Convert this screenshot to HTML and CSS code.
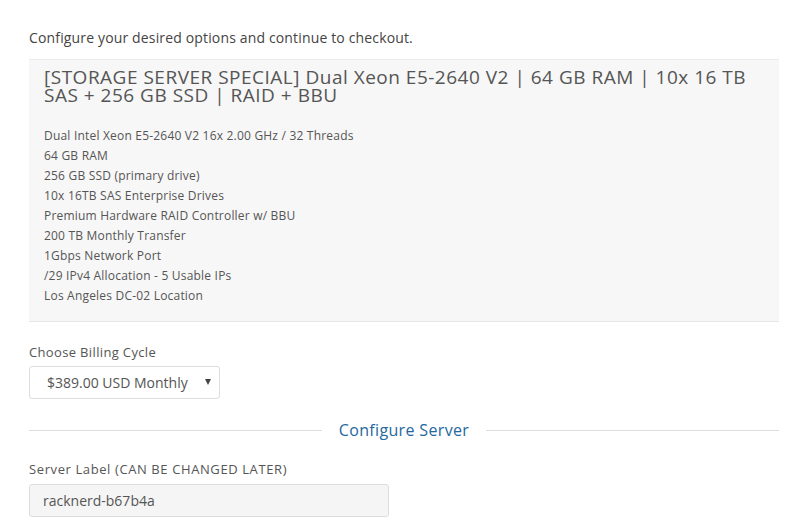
FILE: index.html
```html
<!DOCTYPE html>
<html>
<head>
<meta charset="utf-8">
<link rel="stylesheet" href="styles.css">
</head>
<body>
<div class="page">
  <p class="intro">Configure your desired options and continue to checkout.</p>
  <div class="product">
    <h2 class="product-title">[STORAGE SERVER SPECIAL] Dual Xeon E5-2640 V2 | 64 GB RAM | 10x 16 TB SAS + 256 GB SSD | RAID + BBU</h2>
    <ul class="specs">
      <li>Dual Intel Xeon E5-2640 V2 16x 2.00 GHz / 32 Threads</li>
      <li>64 GB RAM</li>
      <li>256 GB SSD (primary drive)</li>
      <li>10x 16TB SAS Enterprise Drives</li>
      <li>Premium Hardware RAID Controller w/ BBU</li>
      <li>200 TB Monthly Transfer</li>
      <li>1Gbps Network Port</li>
      <li>/29 IPv4 Allocation - 5 Usable IPs</li>
      <li>Los Angeles DC-02 Location</li>
    </ul>
  </div>
  <div class="field billing">
    <label class="label">Choose Billing Cycle</label>
    <div class="select">
      <span class="select-value">$389.00 USD Monthly</span>
      <span class="caret"></span>
    </div>
  </div>
  <div class="divider">
    <span class="line"></span>
    <span class="divider-text">Configure Server</span>
    <span class="line"></span>
  </div>
  <div class="field server">
    <label class="label label-wide">Server Label (CAN BE CHANGED LATER)</label>
    <div class="input">racknerd-b67b4a</div>
  </div>
</div>
</body>
</html>
```
FILE: styles.css
```css
* { box-sizing: border-box; }
html, body { margin: 0; padding: 0; background: #fff; }
body { font-family: "Open Sans", "Liberation Sans", sans-serif; color: #555; }
.page { width: 750px; margin-left: 29px; padding-top: 29px; }
.intro { margin: 0 0 12px; font-size: 14px; line-height: 18px; letter-spacing: 0.15px; color: #444; }
.product { background: #f7f7f7; border-top: 1px solid #ececec; border-bottom: 1px solid #e8e8e8; padding: 8px 15px 15px; }
.product-title { margin: 0; font-weight: 400; font-size: 19px; line-height: 18px; letter-spacing: 0.5px; color: #555; }
.specs { list-style: none; margin: 22px 0 0; padding: 0; font-size: 12px; line-height: 20px; letter-spacing: 0.2px; color: #555; }
.field { display: flex; flex-direction: column; }
.billing { margin-top: 22px; }
.label { font-size: 13px; line-height: 16px; letter-spacing: 0.35px; color: #555; margin-bottom: 6px; }
.label-wide { letter-spacing: 0.6px; margin-bottom: 7px; }
.select { width: 191px; height: 33px; border: 1px solid #ddd; border-radius: 3px; display: flex; align-items: center; justify-content: space-between; padding: 0 8px 0 17px; font-size: 14px; color: #555; }
.caret { width: 0; height: 0; border-left: 3.5px solid transparent; border-right: 3.5px solid transparent; border-top: 6px solid #444; margin-bottom: 2px; }
.divider { display: flex; align-items: center; margin-top: 20px; height: 22px; }
.line { flex: 1; height: 1px; background: #ddd; }
.divider-text { padding: 0 17px; font-size: 16px; letter-spacing: 0.35px; color: #2468a0; }
.server { margin-top: 20px; }
.input { width: 360px; height: 33px; border: 1px solid #ddd; border-radius: 3px; background: #f5f5f5; display: flex; align-items: center; padding: 0 13px; font-size: 14px; color: #555; }
```
